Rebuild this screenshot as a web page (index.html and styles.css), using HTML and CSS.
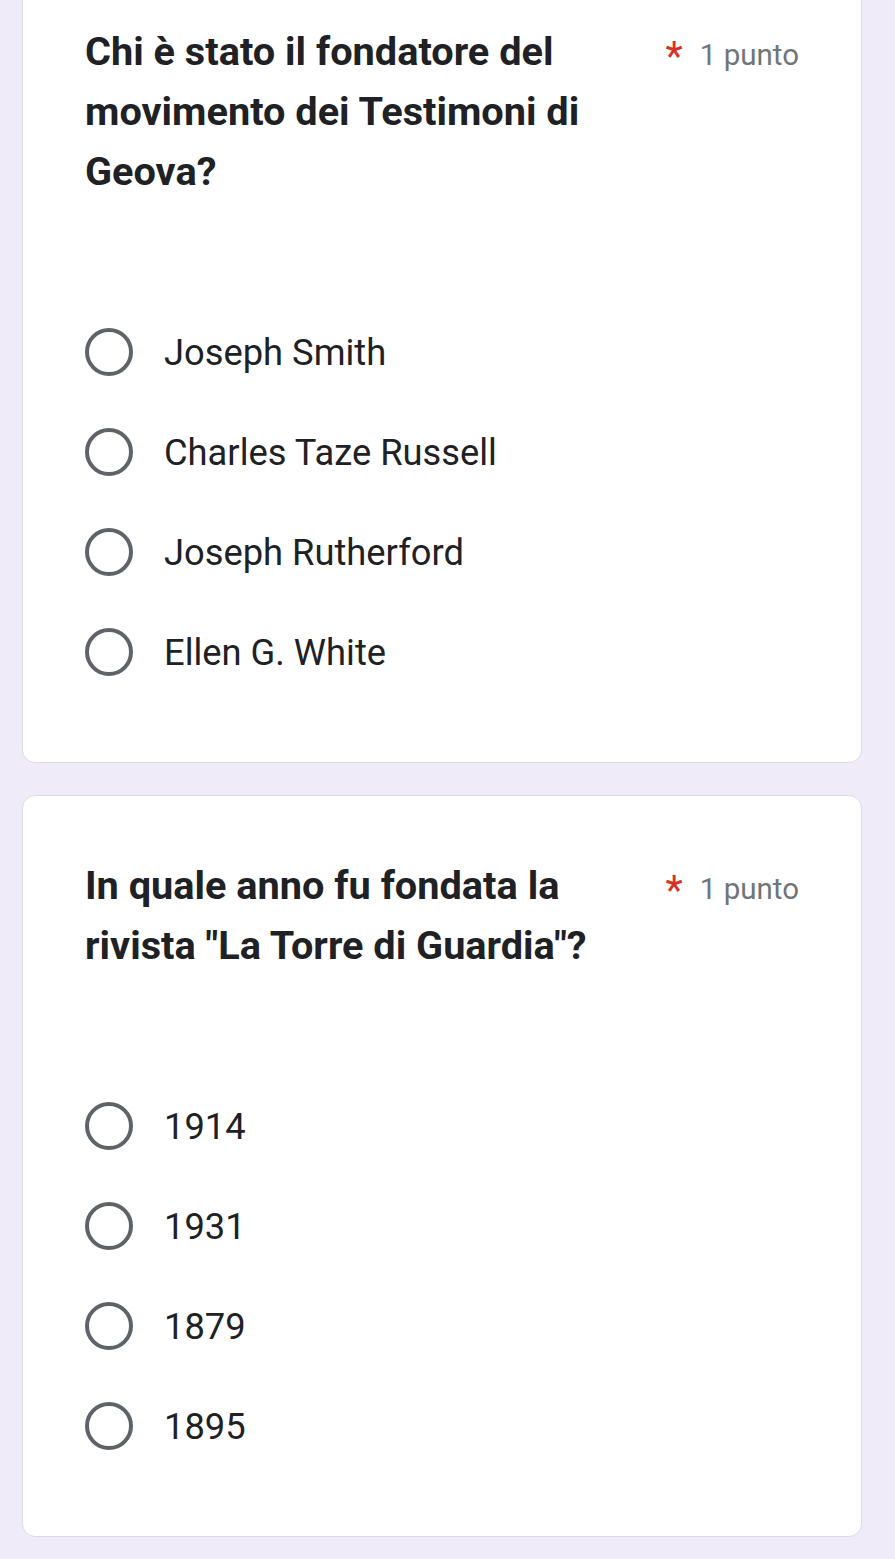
FILE: index.html
```html
<!DOCTYPE html>
<html lang="it">
<head>
<meta charset="utf-8">
<title>Quiz</title>
<link rel="stylesheet" href="styles.css">
</head>
<body>
<div class="page">
  <section class="card">
    <div class="head">
      <h2 class="title">Chi è stato il fondatore del movimento dei Testimoni di Geova?</h2>
      <div class="points"><span class="req">*</span>1 punto</div>
    </div>
    <div class="options">
      <label class="opt"><span class="radio"></span><span class="label">Joseph Smith</span></label>
      <label class="opt"><span class="radio"></span><span class="label">Charles Taze Russell</span></label>
      <label class="opt"><span class="radio"></span><span class="label">Joseph Rutherford</span></label>
      <label class="opt"><span class="radio"></span><span class="label">Ellen G. White</span></label>
    </div>
  </section>
  <section class="card">
    <div class="head">
      <h2 class="title">In quale anno fu fondata la rivista "La Torre di Guardia"?</h2>
      <div class="points"><span class="req">*</span>1 punto</div>
    </div>
    <div class="options">
      <label class="opt"><span class="radio"></span><span class="label">1914</span></label>
      <label class="opt"><span class="radio"></span><span class="label">1931</span></label>
      <label class="opt"><span class="radio"></span><span class="label">1879</span></label>
      <label class="opt"><span class="radio"></span><span class="label">1895</span></label>
    </div>
  </section>
</div>
</body>
</html>
```
FILE: styles.css
```css
html, body {
  margin: 0;
  padding: 0;
  background: #f0ebf8;
}
body {
  font-family: Roboto, "Liberation Sans", Arial, sans-serif;
  color: #202124;
  height: 1559px;
  overflow: hidden;
}
.page {
  margin-top: -39px;
  padding-left: 22px;
  display: flex;
  flex-direction: column;
  gap: 32px;
}
.card {
  width: 840px;
  box-sizing: border-box;
  background: #fff;
  border: 1px solid #dadce0;
  border-radius: 13px;
  padding: 60px 62px 60px 62px;
}
.head {
  display: flex;
  align-items: baseline;
}
.title {
  flex: 1;
  margin: 0;
  font-size: 39.7px;
  font-weight: 700;
  line-height: 60px;
  color: #202124;
}
.points {
  flex-shrink: 0;
  margin-left: 34px;
  font-size: 29.5px;
  color: #70757a;
  white-space: nowrap;
}
.req {
  color: #d93025;
  font-size: 40px;
  line-height: 1;
  vertical-align: -5px;
  margin-right: 17px;
}
.options {
  margin-top: 100px;
  display: flex;
  flex-direction: column;
}
.opt {
  height: 100px;
  display: flex;
  align-items: center;
  gap: 31px;
}
.radio {
  width: 40px;
  height: 40px;
  border: 4.5px solid #5f6368;
  border-radius: 50%;
  flex-shrink: 0;
}
.label {
  font-size: 36.3px;
  color: #202124;
}
```
